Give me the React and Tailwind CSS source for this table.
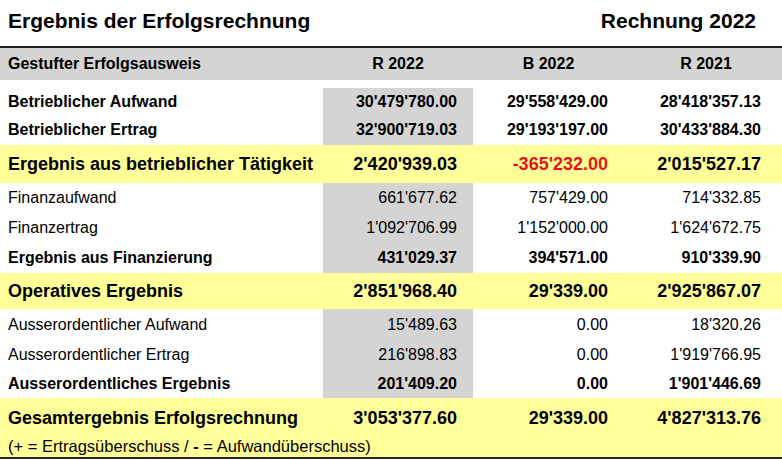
const rows = [
  { label: "Betrieblicher Aufwand", values: ["30'479'780.00", "29'558'429.00", "28'418'357.13"], type: "bold", h: "h-[35px] pt-[8px]" },
  { label: "Betrieblicher Ertrag", values: ["32'900'719.03", "29'193'197.00", "30'433'884.30"], type: "bold", h: "h-[30px]" },
  { label: "Ergebnis aus betrieblicher Tätigkeit", values: ["2'420'939.03", "-365'232.00", "2'015'527.17"], type: "total", h: "h-[38px]", red: 1 },
  { label: "Finanzaufwand", values: ["661'677.62", "757'429.00", "714'332.85"], type: "normal", h: "h-[30px]" },
  { label: "Finanzertrag", values: ["1'092'706.99", "1'152'000.00", "1'624'672.75"], type: "normal", h: "h-[30px]" },
  { label: "Ergebnis aus Finanzierung", values: ["431'029.37", "394'571.00", "910'339.90"], type: "bold", h: "h-[30px]" },
  { label: "Operatives Ergebnis", values: ["2'851'968.40", "29'339.00", "2'925'867.07"], type: "total", h: "h-[36px]" },
  { label: "Ausserordentlicher Aufwand", values: ["15'489.63", "0.00", "18'320.26"], type: "normal", h: "h-[31px]" },
  { label: "Ausserordentlicher Ertrag", values: ["216'898.83", "0.00", "1'919'766.95"], type: "normal", h: "h-[30px]" },
  { label: "Ausserordentliches Ergebnis", values: ["201'409.20", "0.00", "1'901'446.69"], type: "bold", h: "h-[28px]" },
];

const Row = ({ row }) => {
  const isTotal = row.type === "total";
  const text = isTotal
    ? "text-[18px] font-bold"
    : row.type === "bold"
    ? "text-[16px] font-bold"
    : "text-[16px]";
  return (
    <div
      className={`grid grid-cols-[323px_150px_151px_1fr] ${row.h} ${
        isTotal ? "bg-[#ffff99]" : "bg-white"
      } ${text} leading-[20px]`}
    >
      <div className="flex items-center pl-[8px] whitespace-nowrap">{row.label}</div>
      <div
        className={`flex items-center justify-end pr-[16px] ${
          isTotal ? "" : "bg-[#d4d4d4]"
        }`}
      >
        {row.values[0]}
      </div>
      <div
        className={`flex items-center justify-end pr-[16px] ${
          row.red ? "text-[#e8141b]" : ""
        }`}
      >
        {row.values[1]}
      </div>
      <div className="flex items-center justify-end pr-[21px]">{row.values[2]}</div>
    </div>
  );
};

export default function App() {
  return (
    <div
      className="w-[782px] h-[460px] overflow-hidden bg-white text-black"
      style={{ fontFamily: '"Liberation Sans", Arial, sans-serif' }}
    >
      {/* Titel */}
      <div className="flex justify-between h-[46px] pt-[9px] pl-[8px] pr-[26px] text-[21px] font-bold leading-[24px]">
        <span>Ergebnis der Erfolgsrechnung</span>
        <span>Rechnung 2022</span>
      </div>
      <div className="h-[2px] bg-[#222]" />

      {/* Kopfzeile */}
      <div className="grid grid-cols-[323px_150px_151px_1fr] h-[32px] bg-[#d4d4d4] text-[16px] font-bold leading-[20px]">
        <div className="flex items-center pl-[8px]">Gestufter Erfolgsausweis</div>
        <div className="flex items-center justify-center">R 2022</div>
        <div className="flex items-center justify-center">B 2022</div>
        <div className="flex items-center justify-center pl-[6px]">R 2021</div>
      </div>

      {rows.map((row) => (
        <Row key={row.label} row={row} />
      ))}

      {/* Gesamtergebnis */}
      <div className="bg-[#ffff99]">
        <div className="grid grid-cols-[323px_150px_151px_1fr] h-[39px] text-[18px] font-bold leading-[20px]">
          <div className="flex items-center pl-[8px] whitespace-nowrap">Gesamtergebnis Erfolgsrechnung</div>
          <div className="flex items-center justify-end pr-[16px]">3'053'377.60</div>
          <div className="flex items-center justify-end pr-[16px]">29'339.00</div>
          <div className="flex items-center justify-end pr-[21px]">4'827'313.76</div>
        </div>
        <div className="h-[20px] pl-[8px] text-[16.5px] leading-[18px]">
          (+ = Ertragsüberschuss / <span className="font-bold">-</span> = Aufwandüberschuss)
        </div>
      </div>
      <div className="h-[2px] bg-[#222]" />
    </div>
  );
}
